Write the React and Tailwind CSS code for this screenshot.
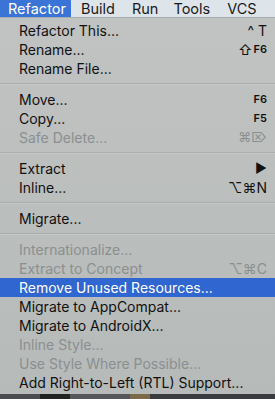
import React from "react";

const items = [
  { label: "Refactor This...", key: "^ T", big: true },
  { label: "Rename...", key: "F6", shift: true },
  { label: "Rename File..." },
  { sep: true },
  { label: "Move...", key: "F6" },
  { label: "Copy...", key: "F5" },
  { label: "Safe Delete...", key: "⌘⌦", off: true, mid: true },
  { sep: true },
  { label: "Extract", key: "▶", mid: true },
  { label: "Inline...", key: "⌥⌘N", big: true },
  { sep: true },
  { label: "Migrate..." },
  { sep: true },
  { label: "Internationalize...", off: true },
  { label: "Extract to Concept", key: "⌥⌘C", off: true, big: true },
  { label: "Remove Unused Resources...", active: true },
  { label: "Migrate to AppCompat..." },
  { label: "Migrate to AndroidX..." },
  { label: "Inline Style...", off: true },
  { label: "Use Style Where Possible...", off: true },
  { label: "Add Right-to-Left (RTL) Support..." },
];

function Row({ item }) {
  if (item.sep) {
    return (
      <div className="h-[12px] flex items-center">
        <div className="w-full h-[2px] bg-[#a9adad] border-b border-[#c6c9c8]" />
      </div>
    );
  }
  const color = item.active
    ? "bg-[#2f66d0] text-white"
    : item.off
    ? "text-[#8b8f90]"
    : "text-[#111]";
  let keyClass = "text-[11px] leading-none font-semibold";
  if (item.big) keyClass = "text-[14px] leading-none";
  if (item.mid) keyClass = "text-[13px] leading-none";
  return (
    <div className={`h-[19px] flex items-center justify-between pl-[19px] pr-[8px] ${color}`}>
      <span className="text-[14px] leading-none">{item.label}</span>
      {item.key && (
        <span className="flex items-center">
          {item.shift && <span className="text-[14px] leading-none mr-[1px]">⇧</span>}
          <span className={keyClass}>{item.key}</span>
        </span>
      )}
    </div>
  );
}

export default function App() {
  return (
    <div className="w-[275px] h-[399px] overflow-hidden flex flex-col bg-[#bcbfbe]" style={{ fontFamily: "Inter, 'Noto Sans', sans-serif" }}>
      <div className="h-[18px] flex items-center bg-[#dde5eb] text-[14.5px] leading-[18px] text-[#1a1a1a] border-b border-[#a8adb0]">
        <div className="h-full w-[71px] bg-[#3a74d6] text-white flex items-center pl-[8px]">Refactor</div>
        <span className="ml-[10px]">Build</span>
        <span className="ml-[17px]">Run</span>
        <span className="ml-[15px]">Tools</span>
        <span className="ml-[17px]">VCS</span>
      </div>
      <div className="flex-1 flex flex-col pt-[3px] bg-gradient-to-b from-[#c0c3c2] to-[#b6bab9]">
        {items.map((it, i) => (
          <Row key={i} item={it} />
        ))}
      </div>
      <div className="h-[5px] bg-[#2d2f33] flex">
        <div className="w-[40px] bg-[#4a4c50]" />
        <div className="w-[30px] bg-[#222]" />
        <div className="w-[60px] bg-[#55575a]" />
        <div className="w-[20px] bg-[#7a6a4a]" />
        <div className="flex-1 bg-[#3a3c40]" />
      </div>
    </div>
  );
}
